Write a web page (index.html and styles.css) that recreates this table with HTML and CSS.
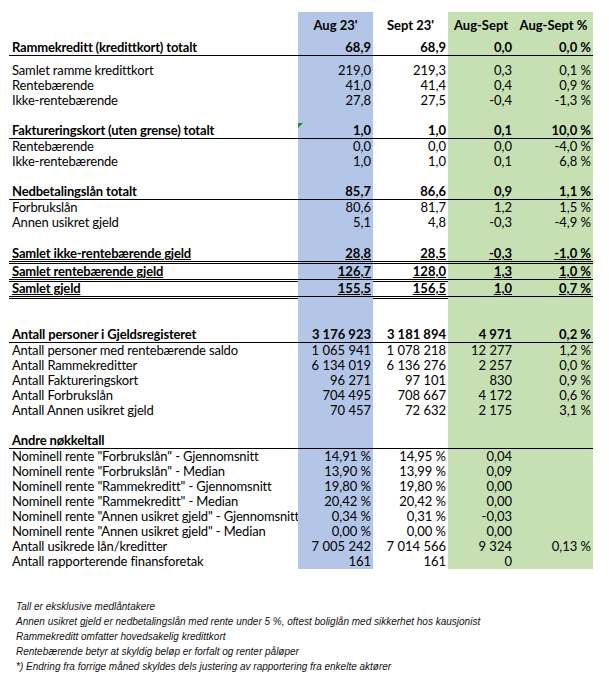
FILE: index.html
```html
<!DOCTYPE html>
<html lang="no">
<head>
<meta charset="utf-8">
<title>Gjeldsregisteret</title>
<link rel="stylesheet" href="styles.css">
</head>
<body>
<div class="sheet">
  <div class="row hdr"><div class="lbl"></div><div class="b">Aug 23'</div><div>Sept 23'</div><div class="g">Aug-Sept</div><div class="g">Aug-Sept %</div></div>
  <div class="row tot"><div class="lbl">Rammekreditt (kredittkort) totalt</div><div class="b">68,9</div><div>68,9</div><div class="g">0,0</div><div class="g">0,0 %</div></div>
  <div class="row sp7"><div class="lbl"></div><div class="b"></div><div></div><div class="g"></div><div class="g"></div></div>
  <div class="row"><div class="lbl">Samlet ramme kredittkort</div><div class="b">219,0</div><div>219,3</div><div class="g">0,3</div><div class="g">0,1 %</div></div>
  <div class="row"><div class="lbl">Rentebærende</div><div class="b">41,0</div><div>41,4</div><div class="g">0,4</div><div class="g">0,9 %</div></div>
  <div class="row"><div class="lbl">Ikke-rentebærende</div><div class="b">27,8</div><div>27,5</div><div class="g">-0,4</div><div class="g">-1,3 %</div></div>
  <div class="row"><div class="lbl"></div><div class="b"></div><div></div><div class="g"></div><div class="g"></div></div>
  <div class="row tot tot16"><div class="lbl">Faktureringskort (uten grense) totalt</div><div class="b flagged"><span class="flag"></span>1,0</div><div>1,0</div><div class="g">0,1</div><div class="g">10,0 %</div></div>
  <div class="row"><div class="lbl">Rentebærende</div><div class="b">0,0</div><div>0,0</div><div class="g">0,0</div><div class="g">-4,0 %</div></div>
  <div class="row"><div class="lbl">Ikke-rentebærende</div><div class="b">1,0</div><div>1,0</div><div class="g">0,1</div><div class="g">6,8 %</div></div>
  <div class="row"><div class="lbl"></div><div class="b"></div><div></div><div class="g"></div><div class="g"></div></div>
  <div class="row tot tot16"><div class="lbl">Nedbetalingslån totalt</div><div class="b">85,7</div><div>86,6</div><div class="g">0,9</div><div class="g">1,1 %</div></div>
  <div class="row"><div class="lbl">Forbrukslån</div><div class="b">80,6</div><div>81,7</div><div class="g">1,2</div><div class="g">1,5 %</div></div>
  <div class="row"><div class="lbl">Annen usikret gjeld</div><div class="b">5,1</div><div>4,8</div><div class="g">-0,3</div><div class="g">-4,9 %</div></div>
  <div class="row"><div class="lbl"></div><div class="b"></div><div></div><div class="g"></div><div class="g"></div></div>
  <div class="row dbl dbl19"><div class="lbl"><span class="u">Samlet ikke-rentebærende gjeld</span></div><div class="b"><span class="u">28,8</span></div><div><span class="u">28,5</span></div><div class="g"><span class="u">-0,3</span></div><div class="g"><span class="u">-1,0 %</span></div></div>
  <div class="row dbl"><div class="lbl"><span class="u">Samlet rentebærende gjeld</span></div><div class="b"><span class="u">126,7</span></div><div><span class="u">128,0</span></div><div class="g"><span class="u">1,3</span></div><div class="g"><span class="u">1,0 %</span></div></div>
  <div class="row dbl"><div class="lbl"><span class="u">Samlet gjeld</span></div><div class="b"><span class="u">155,5</span></div><div><span class="u">156,5</span></div><div class="g"><span class="u">1,0</span></div><div class="g"><span class="u">0,7 %</span></div></div>
  <div class="row sp29"><div class="lbl"></div><div class="b"></div><div></div><div class="g"></div><div class="g"></div></div>
  <div class="row tot tot16"><div class="lbl">Antall personer i Gjeldsregisteret</div><div class="b">3 176 923</div><div>3 181 894</div><div class="g">4 971</div><div class="g">0,2 %</div></div>
  <div class="row"><div class="lbl">Antall personer med rentebærende saldo</div><div class="b">1 065 941</div><div>1 078 218</div><div class="g">12 277</div><div class="g">1,2 %</div></div>
  <div class="row"><div class="lbl">Antall Rammekreditter</div><div class="b">6 134 019</div><div>6 136 276</div><div class="g">2 257</div><div class="g">0,0 %</div></div>
  <div class="row"><div class="lbl">Antall Faktureringskort</div><div class="b">96 271</div><div>97 101</div><div class="g">830</div><div class="g">0,9 %</div></div>
  <div class="row"><div class="lbl">Antall Forbrukslån</div><div class="b">704 495</div><div>708 667</div><div class="g">4 172</div><div class="g">0,6 %</div></div>
  <div class="row"><div class="lbl">Antall Annen usikret gjeld</div><div class="b">70 457</div><div>72 632</div><div class="g">2 175</div><div class="g">3,1 %</div></div>
  <div class="row"><div class="lbl"></div><div class="b"></div><div></div><div class="g"></div><div class="g"></div></div>
  <div class="row tot tot16"><div class="lbl">Andre nøkkeltall</div><div class="b"></div><div></div><div class="g"></div><div class="g"></div></div>
  <div class="row"><div class="lbl">Nominell rente "Forbrukslån" - Gjennomsnitt</div><div class="b">14,91 %</div><div>14,95 %</div><div class="g">0,04</div><div class="g"></div></div>
  <div class="row"><div class="lbl">Nominell rente "Forbrukslån" - Median</div><div class="b">13,90 %</div><div>13,99 %</div><div class="g">0,09</div><div class="g"></div></div>
  <div class="row"><div class="lbl">Nominell rente "Rammekreditt" - Gjennomsnitt</div><div class="b">19,80 %</div><div>19,80 %</div><div class="g">0,00</div><div class="g"></div></div>
  <div class="row"><div class="lbl">Nominell rente "Rammekreditt" - Median</div><div class="b">20,42 %</div><div>20,42 %</div><div class="g">0,00</div><div class="g"></div></div>
  <div class="row"><div class="lbl">Nominell rente "Annen usikret gjeld" - Gjennomsnitt</div><div class="b">0,34 %</div><div>0,31 %</div><div class="g">-0,03</div><div class="g"></div></div>
  <div class="row"><div class="lbl">Nominell rente "Annen usikret gjeld" - Median</div><div class="b">0,00 %</div><div>0,00 %</div><div class="g">0,00</div><div class="g"></div></div>
  <div class="row"><div class="lbl">Antall usikrede lån/kreditter</div><div class="b">7 005 242</div><div>7 014 566</div><div class="g">9 324</div><div class="g">0,13 %</div></div>
  <div class="row"><div class="lbl">Antall rapporterende finansforetak</div><div class="b">161</div><div>161</div><div class="g">0</div><div class="g"></div></div>
</div>
<div class="notes">
  <p>Tall er eksklusive medlåntakere</p>
  <p>Annen usikret gjeld er nedbetalingslån med rente under 5 %, oftest boliglån med sikkerhet hos kausjonist</p>
  <p>Rammekreditt omfatter hovedsakelig kredittkort</p>
  <p>Rentebærende betyr at skyldig beløp er forfalt og renter påløper</p>
  <p>*) Endring fra forrige måned skyldes dels justering av rapportering fra enkelte aktører</p>
</div>
</body>
</html>
```
FILE: styles.css
```css
html, body {
  margin: 0;
  padding: 0;
  background: #fff;
}

.sheet {
  margin: 12px 0 0 9px;
  width: 584px;
  font-family: Lato, "Noto Sans", sans-serif;
  font-size: 13px;
  color: #000;
}

.row {
  display: grid;
  grid-template-columns: 289px 75px 75px 66px 79px;
  height: 15px;
}

.row > div {
  box-sizing: border-box;
  display: flex;
  align-items: flex-end;
  justify-content: flex-end;
  padding-right: 2px;
  line-height: 15px;
  white-space: pre;
  min-width: 0;
}

.row > .lbl {
  justify-content: flex-start;
  padding-left: 3px;
  overflow: hidden;
  letter-spacing: -0.16px;
}

.b { background: #b4c6e7; }
.g { background: #c6e0b4; }

.hdr { height: 26px; font-weight: bold; }
.hdr > div { align-items: center; justify-content: center; padding-right: 0; }

.tot { height: 18px; font-weight: bold; }
.tot > div { border-bottom: 1px solid #000; }
.tot16 { height: 16px; }

.dbl { height: 17px; font-weight: bold; }
.dbl19 { height: 19px; }
.dbl > div { border-bottom: 3px double #000; }
.u { text-decoration: underline; }

.sp7 { height: 7px; }
.sp29 { height: 29px; }

.flagged { position: relative; }
.flag {
  position: absolute;
  top: 0;
  left: 0;
  width: 0;
  height: 0;
  border-top: 5px solid #1f8f1f;
  border-right: 5px solid transparent;
}

.notes {
  margin: 30px 0 0 16px;
  font-family: "Liberation Sans", Arial, sans-serif;
  font-style: italic;
  font-size: 10px;
  line-height: 15px;
  color: #111;
}

.notes p { margin: 0; white-space: nowrap; }
```
